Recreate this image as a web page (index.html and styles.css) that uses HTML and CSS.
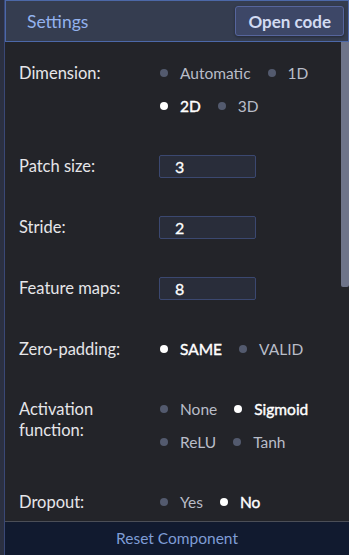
FILE: index.html
```html
<!DOCTYPE html>
<html lang="en">
<head>
    <meta charset="UTF-8">
    <meta name="viewport" content="width=device-width, initial-scale=1.0">
    <title>Settings</title>
    <link rel="stylesheet" href="styles.css">
</head>
<body>
    <div class="panel">
        <div class="panel-header">
            <span class="panel-title">Settings</span>
            <button class="open-code">Open code</button>
        </div>

        <div class="panel-main">
            <div class="panel-body">
                <div class="field">
                    <div class="field-label">Dimension:</div>
                    <div class="radio-group">
                        <span class="radio">Automatic</span>
                        <span class="radio">1D</span>
                        <span class="radio checked">2D</span>
                        <span class="radio">3D</span>
                    </div>
                </div>

                <div class="field">
                    <div class="field-label">Patch size:</div>
                    <input class="num-input" type="text" value="3">
                </div>

                <div class="field">
                    <div class="field-label">Stride:</div>
                    <input class="num-input" type="text" value="2">
                </div>

                <div class="field">
                    <div class="field-label">Feature maps:</div>
                    <input class="num-input" type="text" value="8">
                </div>

                <div class="field">
                    <div class="field-label">Zero-padding:</div>
                    <div class="radio-group">
                        <span class="radio checked">SAME</span>
                        <span class="radio">VALID</span>
                    </div>
                </div>

                <div class="field">
                    <div class="field-label">Activation function:</div>
                    <div class="radio-group">
                        <span class="radio">None</span>
                        <span class="radio checked">Sigmoid</span>
                        <span class="radio">ReLU</span>
                        <span class="radio">Tanh</span>
                    </div>
                </div>

                <div class="field">
                    <div class="field-label">Dropout:</div>
                    <div class="radio-group">
                        <span class="radio">Yes</span>
                        <span class="radio checked">No</span>
                    </div>
                </div>
            </div>

            <!-- scroll position of the settings list -->
            <div class="scroll-track">
                <div class="scroll-thumb"></div>
            </div>
        </div>

        <div class="panel-footer">Reset Component</div>
    </div>
</body>
</html>
```

FILE: styles.css
```css
html, body {
    height: 100%;
}
body {
    margin: 0;
    background-color: #2b3041;
    font-family: "Lato", "Open Sans", sans-serif;
    font-size: 16.5px;
    color: #e6e6e9;
    overflow: hidden;
}
.panel {
    height: 100%;
    margin-left: 4px;
    border-left: 1px solid #3a4876;
    background-color: #232429;
    display: flex;
    flex-direction: column;
}
.panel-header {
    flex: none;
    height: 40px;
    display: flex;
    align-items: center;
    justify-content: space-between;
    padding: 0 4px 0 21px;
    background-color: #353d50;
    border: 1px solid #4c68a8;
}
.panel-title {
    color: #93b2ee;
    font-size: 17.5px;
}
.open-code {
    height: 30px;
    padding: 0 12px;
    background-color: #3d4767;
    border: 1px solid #56659c;
    border-radius: 3px;
    color: #d2dbf2;
    font-family: inherit;
    font-size: 17px;
    font-weight: 700;
    box-shadow: 0 1px 3px rgba(0, 0, 0, 0.35);
}
.panel-main {
    flex: 1;
    min-height: 0;
    display: flex;
}
.panel-body {
    flex: 1;
    overflow: hidden;
    padding: 20px 0 0 14px;
}
.scroll-track {
    flex: none;
    width: 8px;
}
.scroll-thumb {
    height: 245px;
    background-color: #6e7489;
    border-radius: 0 0 2px 2px;
}
.field {
    display: flex;
    align-items: flex-start;
    margin-bottom: 38px;
}
.field-label {
    width: 140px;
    flex: none;
    line-height: 21px;
    padding-top: 1px;
    padding-right: 12px;
    box-sizing: border-box;
}
.radio-group {
    display: flex;
    flex-wrap: wrap;
    row-gap: 11px;
    column-gap: 16px;
    width: 176px;
}
.radio {
    display: flex;
    align-items: center;
    gap: 12px;
    height: 22px;
    font-size: 15.5px;
    color: #b9bdc8;
}
.radio::before {
    content: "";
    width: 8px;
    height: 8px;
    margin-left: 1px;
    border-radius: 50%;
    background-color: #535a6e;
}
.radio.checked {
    color: #ffffff;
    -webkit-text-stroke: 0.4px #ffffff;
}
.radio.checked::before {
    background-color: #ffffff;
}
.num-input {
    width: 97px;
    height: 23px;
    box-sizing: border-box;
    padding: 0 15px;
    background-color: #292d3a;
    border: 1px solid #3b4870;
    border-radius: 2px;
    color: #ffffff;
    -webkit-text-stroke: 0.3px #ffffff;
    font-family: inherit;
    font-size: 16px;
}
.panel-footer {
    flex: none;
    height: 33px;
    line-height: 33px;
    text-align: center;
    background-color: #111a2f;
    border-top: 1px solid #4b4e57;
    color: #7f9dd6;
    font-size: 15.5px;
}
```
